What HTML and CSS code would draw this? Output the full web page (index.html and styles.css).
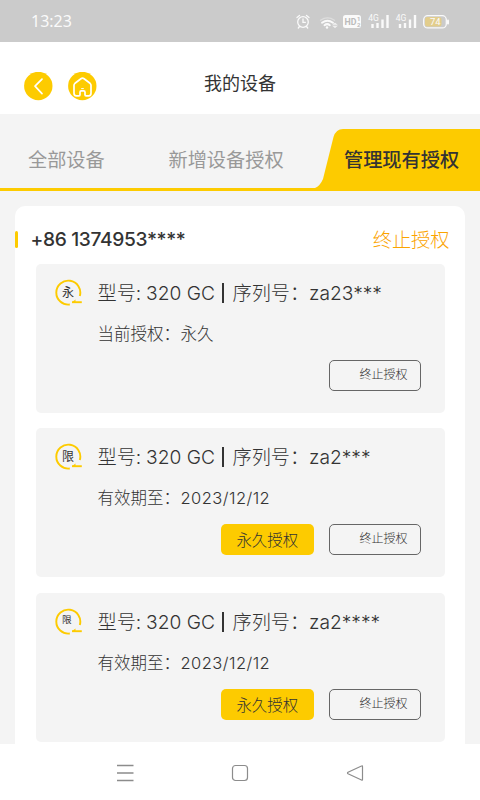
FILE: index.html
```html
<!DOCTYPE html>
<html lang="zh-CN">
<head>
<meta charset="utf-8">
<title>我的设备</title>
<link rel="stylesheet" href="styles.css">
</head>
<body>
<div class="screen">
  <div class="status">
    <span class="clock">13:23</span>
    <svg class="status-icons" width="160" height="20" viewBox="0 0 160 20" fill="none" stroke="#fafafa" stroke-width="1.3" stroke-linecap="round">
      <circle cx="7" cy="10" r="5.3"/><path d="M7 7v3.3h2.4M1 5.500l2.500-2M13 5.500l-2.500-2M3.500 14.500l-1.200 1.500M10.500 14.500l1.200 1.500"/>
      <path d="M24.500 8.200q7-4.700 14 0" stroke-opacity=".4"/><path d="M26 10.700q5.500-4 11 0M28.500 13.200q2.700-2.200 5.300 0" stroke-width="2"/><circle cx="31" cy="15.500" r="1.200" fill="#fafafa" stroke="none"/><path d="M37 12.500l2-1.500 2 1.500zM37 14.200l2 1.500 2-1.500z" fill="#fafafa" stroke-width=".4"/>
      <rect x="47" y="3" width="18" height="13" rx="2.500" fill="#fafafa" stroke="none"/>
      <g fill="#bcbcbc" stroke="none" class="tiny"><text x="48.500" y="13" font-size="8.800">HD</text><text x="61" y="9" font-size="6">1</text><text x="61" y="15" font-size="6">2</text></g>
      <g fill="#fafafa" stroke="none" class="tiny-regular"><text x="72.300" y="9" font-size="8.500">4G</text><text x="99.700" y="9" font-size="8.500">4G</text></g>
      <path d="M76.500 16v-4M81.500 16v-5M86.500 16V7.500M91.500 16V3M104 16v-4M109 16v-5M114 16V7.500M119 16V3" stroke-width="2.400" stroke-linecap="butt"/>
      <rect x="127.700" y="3.700" width="22.600" height="12.200" rx="4"/><rect x="129" y="5" width="16.500" height="9.600" rx="2.500" fill="#e2cd8c" stroke="none"/><path d="M152 8.500v3" stroke-width="2"/>
      <text x="134" y="13.400" font-size="9.500" fill="#fafafa" stroke="none" class="tiny-regular">74</text>
    </svg>
  </div>

  <header class="header">
    <svg class="round-icon" width="29" height="29" viewBox="0 0 29 29" fill="none" stroke="#fff" stroke-width="1.700" stroke-linecap="round" stroke-linejoin="round"><circle cx="14.300" cy="14" r="14.200" fill="#fdcb00" stroke="none"/><path d="M18 7.200l-7 7 7 7.500"/></svg>
    <svg class="round-icon" width="29" height="29" viewBox="0 0 29 29" fill="none" stroke="#fff" stroke-width="1.700" stroke-linecap="round" stroke-linejoin="round"><circle cx="14.300" cy="14" r="14.200" fill="#fdcb00" stroke="none"/><path d="M14.500 6.200q-.8 0-1.600.6L7 11.300q-1 .8-1 2v8q0 2.500 2.300 2.500H11q1 0 1-1v-2.500q0-1.500 1.200-1.500h2.600q1.200 0 1.200 1.500v2.500q0 1 1 1h2.700q2.300 0 2.300-2.500v-8q0-1.200-1-2l-5.900-4.500q-.8-.6-1.600-.6z"/><path d="M13.600 16.600h1.800" stroke-width="1"/></svg>
    <h1 class="title">我的设备</h1>
  </header>

  <nav class="tabs">
    <svg class="tab-shape" width="480" height="62" viewBox="0 0 480 62"><path d="M0 59H315Q320 57 323 50L333.500 8Q336 0 343 0H480V62H0z" fill="#fdcb00"/></svg>
    <span class="tab tab-all">全部设备</span>
    <span class="tab tab-new">新增设备授权</span>
    <span class="tab tab-manage">管理现有授权</span>
  </nav>

  <main class="panel">
    <div class="account"><span class="phone">+86 1374953****</span><span class="stop-link">终止授权</span></div>

    <section class="card">
      <div class="badge"><svg width="28" height="28" viewBox="0 0 28 28" fill="none" stroke="#fdcb00" stroke-width="1.900"><path d="M14.800 25.500A12 12 0 1 1 24.800 17"/><path d="M17 23.200h9.800"/><path d="M17 23.200l3.500-2.800v2.800z" fill="#fdcb00" stroke="none"/></svg><span class="badge-text">永</span></div>
      <div class="details">
        <div class="model"><span class="model-label">型号:</span><span class="model-name">320 GC</span><span class="bar"></span><span class="serial-label">序列号：</span><span>za23***</span></div>
        <div class="grant"><span class="grant-label">当前授权：</span><span>永久</span></div>
        <div class="actions"><button class="btn btn-stop">终止授权</button></div>
      </div>
    </section>

    <section class="card">
      <div class="badge"><svg width="28" height="28" viewBox="0 0 28 28" fill="none" stroke="#fdcb00" stroke-width="1.900"><path d="M14.800 25.500A12 12 0 1 1 24.800 17"/><path d="M17 23.200h9.800"/><path d="M17 23.200l3.500-2.800v2.800z" fill="#fdcb00" stroke="none"/></svg><span class="badge-text">限</span></div>
      <div class="details">
        <div class="model"><span class="model-label">型号:</span><span class="model-name">320 GC</span><span class="bar"></span><span class="serial-label">序列号：</span><span>za2***</span></div>
        <div class="grant"><span class="grant-label">有效期至：</span><span class="date">2023/12/12</span></div>
        <div class="actions"><button class="btn btn-forever">永久授权</button><button class="btn btn-stop">终止授权</button></div>
      </div>
    </section>

    <section class="card card-last">
      <div class="badge"><svg width="28" height="28" viewBox="0 0 28 28" fill="none" stroke="#fdcb00" stroke-width="1.900"><path d="M14.800 25.500A12 12 0 1 1 24.800 17"/><path d="M17 23.200h9.800"/><path d="M17 23.200l3.500-2.800v2.800z" fill="#fdcb00" stroke="none"/></svg><span class="badge-text badge-small">限</span></div>
      <div class="details">
        <div class="model"><span class="model-label">型号:</span><span class="model-name">320 GC</span><span class="bar"></span><span class="serial-label">序列号：</span><span>za2****</span></div>
        <div class="grant"><span class="grant-label">有效期至：</span><span class="date">2023/12/12</span></div>
        <div class="actions"><button class="btn btn-forever">永久授权</button><button class="btn btn-stop">终止授权</button></div>
      </div>
    </section>
  </main>

  <footer class="navbar">
    <svg width="18" height="18" viewBox="0 0 18 18" stroke="#8c8c8c" stroke-width="1.400"><path d="M1 1.500h16.500M1 9h16.500M1 16.500h16.500"/></svg>
    <svg width="18" height="18" viewBox="0 0 18 18" fill="none" stroke="#8c8c8c" stroke-width="1.200"><rect x="1.500" y="1.500" width="15" height="15" rx="3"/></svg>
    <svg width="18" height="18" viewBox="0 0 18 18" fill="none" stroke="#8c8c8c" stroke-width="1.200" stroke-linejoin="round"><path d="M16.500 2.500v13q0 1-1 .5L2 9.700q-1-.7 0-1.400L15.500 2q1-.5 1 .5z"/></svg>
  </footer>
</div>
</body>
</html>
```
FILE: styles.css
```css
* { box-sizing: border-box; }
body {
  margin: 0;
  background: #fff;
  color: #333;
  font-family: Inter, "Noto Sans CJK SC", sans-serif;
}
.screen {
  width: 480px;
  height: 800px;
  display: flex;
  flex-direction: column;
  overflow: hidden;
  background: #f4f4f4;
}
.status {
  height: 42px;
  flex: none;
  display: flex;
  align-items: center;
  justify-content: space-between;
  padding: 0 24px 0 31px;
  background: #cbcbcb;
}
.clock { color: #fafafa; font-family: "Noto Sans", sans-serif; font-size: 16px; letter-spacing: 0; }
.status-icons { margin-top: 2px; }
.tiny { font-family: Roboto, sans-serif; font-weight: 700; }
.tiny-regular { font-family: Roboto, sans-serif; }
.header {
  height: 72px;
  flex: none;
  position: relative;
  display: flex;
  align-items: center;
  gap: 14.500px;
  padding: 16px 24px 0;
  background: #fff;
}
.title {
  position: absolute;
  left: 0;
  right: 0;
  top: 25px;
  margin: 0;
  text-align: center;
  font-size: 18px;
  line-height: 34px;
  font-weight: 400;
}
.tabs {
  height: 62px;
  margin-top: 15px;
  flex: none;
  position: relative;
  display: flex;
  padding-left: 28px;
  font-size: 19.200px;
  line-height: 62px;
  white-space: nowrap;
}
.tab-shape { position: absolute; left: 0; top: 0; }
.tab { position: relative; color: #999; }
.tab-all { width: 140.500px; }
.tab-new { width: 175.500px; }
.tab-manage { color: #333; font-weight: 500; }
.panel {
  height: 538px;
  margin: 15px 15px 0;
  flex: none;
  background: #fff;
  border-radius: 10px 10px 0 0;
}
.account {
  height: 58px;
  display: flex;
  align-items: center;
  padding: 8px 15.500px 0 0;
}
.account::before {
  content: "";
  width: 3px;
  height: 17px;
  border-radius: 2px;
  background: #fdcb00;
}
.phone { margin-left: 12.500px; font-size: 19.200px; font-weight: 500; letter-spacing: -.35px; }
.stop-link { margin-left: auto; color: #fba300; font-size: 19.200px; font-weight: 300; }
.card {
  height: 149px;
  margin: 0 20px 15px 21px;
  display: flex;
  border-radius: 5px;
  background: #f4f4f4;
  color: #333;
  font-weight: 300;
}
.card-last { margin-top: 16px; }
.badge { width: 61.500px; padding: 15px 0 0 18.500px; position: relative; flex: none; }
.badge svg { display: block; }
.badge-text { position: absolute; left: 26px; top: 20px; font-size: 12px; line-height: 17px; font-weight: 400; }
.badge-small { left: 26px; top: 18px; font-size: 9.600px; }
.details { flex: 1; padding-right: 24px; }
.model {
  height: 30px;
  margin-top: 14px;
  display: flex;
  font-size: 19.200px;
  line-height: 30px;
  white-space: nowrap;
  letter-spacing: 0;
}
.model-label { width: 48.500px; letter-spacing: 0; }
.model-name { width: 76px; }
.bar { width: 1.500px; height: 20px; margin: 5px 9px 0 0; background: #333; }
.serial-label { width: 76.500px; letter-spacing: 0; }
.grant {
  height: 24px;
  margin-top: 14px;
  display: flex;
  font-size: 16.500px;
  line-height: 24px;
}
.grant-label { width: 83px; white-space: nowrap; }
.date { letter-spacing: .45px; }
.actions {
  display: flex;
  justify-content: flex-end;
  gap: 15px;
  margin-top: 14px;
}
.btn {
  width: 92.500px;
  height: 31px;
  padding: 0;
  border: 0;
  border-radius: 5px;
  color: #333;
  font-family: inherit;
  font-weight: 300;
  white-space: nowrap;
}
.btn-forever { padding-bottom: 2px; background: #fdcb00; font-size: 15.400px; }
.btn-stop {
  padding: 0 0 4px 17.500px;
  border: 1px solid #666;
  background: transparent;
  font-size: 12px;
}
.navbar {
  height: 56px;
  flex: none;
  display: flex;
  justify-content: center;
  align-items: center;
  gap: 97px;
  padding-top: 1px;
  background: #fff;
}
```
